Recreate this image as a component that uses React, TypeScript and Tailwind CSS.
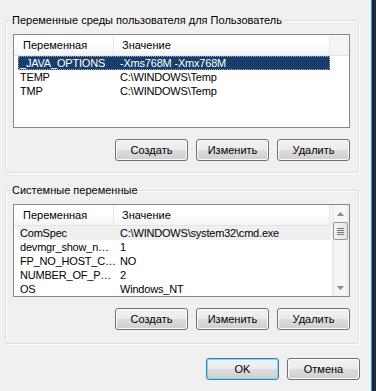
const FONT = "font-['Liberation_Sans',Arial,sans-serif]"

type Row = { name: string; value: string }

const USER_VARS: Row[] = [
  { name: '_JAVA_OPTIONS', value: '-Xms768M -Xmx768M' },
  { name: 'TEMP', value: 'C:\\WINDOWS\\Temp' },
  { name: 'TMP', value: 'C:\\WINDOWS\\Temp' },
]

const SYS_VARS: Row[] = [
  { name: 'ComSpec', value: 'C:\\WINDOWS\\system32\\cmd.exe' },
  { name: 'devmgr_show_n…', value: '1' },
  { name: 'FP_NO_HOST_C…', value: 'NO' },
  { name: 'NUMBER_OF_P…', value: '2' },
  { name: 'OS', value: 'Windows_NT' },
]

function Btn({ label, primary }: { label: string; primary?: boolean }) {
  return (
    <button
      className={
        primary
          ? 'w-[73px] h-[22px] rounded-[3px] border border-[#3c7fb1] bg-[linear-gradient(#f2f2f2_0%,#ebebeb_50%,#dddddd_50%,#cfcfcf_100%)] shadow-[inset_0_0_0_1px_#7fd8f4] text-[11px] text-black'
          : 'w-[73px] h-[22px] rounded-[3px] border border-[#707070] bg-[linear-gradient(#f2f2f2_0%,#ebebeb_50%,#dddddd_50%,#cfcfcf_100%)] shadow-[inset_0_0_0_1px_#fcfcfc] text-[11px] text-black'
      }
    >
      {label}
    </button>
  )
}

function Header() {
  return (
    <div className="flex h-[21px] bg-[linear-gradient(#ffffff_0%,#ffffff_45%,#f3f4f6_100%)] border-b border-[#e2e4e7] text-[11px] text-black">
      <div className="w-[100px] pl-[9px] flex items-center border-r border-[#e3e8ee]">Переменная</div>
      <div className="w-[216px] pl-[8px] flex items-center border-r border-[#e3e8ee]">Значение</div>
      <div className="flex-1 bg-[#f4f4f4]" />
    </div>
  )
}

function Rows({ rows, selected, soft }: { rows: Row[]; selected?: number; soft?: number }) {
  return (
    <div className="text-[11px] tracking-[-0.2px]">
      {rows.map((r, i) => (
        <div
          key={r.name}
          className={
            i === selected
              ? 'ml-[4px] w-[312px] h-[14px] flex items-center bg-[#183e69] text-white outline outline-1 outline-dotted outline-offset-[-1px] outline-[#8ea9c8]'
              : i === soft
                ? 'ml-[4px] w-[313px] h-[14px] flex items-center bg-[#efefef] text-black'
                : 'ml-[4px] w-[312px] h-[14px] flex items-center text-black'
          }
        >
          <div className="w-[96px] shrink-0 pl-[2px] whitespace-nowrap">{r.name}</div>
          <div className="pl-[6px] whitespace-nowrap">{r.value}</div>
        </div>
      ))}
    </div>
  )
}

function Arrow({ up }: { up?: boolean }) {
  return (
    <div className="h-[17px] flex items-center justify-center">
      <svg width="7" height="4" viewBox="0 0 7 4">
        {up ? <path d="M0 4 L3.5 0 L7 4 Z" fill="#8a8a8a" /> : <path d="M0 0 L3.5 4 L7 0 Z" fill="#8a8a8a" />}
      </svg>
    </div>
  )
}

function ScrollBar() {
  return (
    <div className="w-[17px] flex flex-col bg-[linear-gradient(90deg,#e8e8e8,#f5f5f5_20%,#f5f5f5_80%,#e8e8e8)]">
      <Arrow up />
      <div className="mx-[1px] h-[18px] rounded-[2px] border border-[#979797] bg-[linear-gradient(90deg,#f3f3f3,#e6e6e6)] flex flex-col items-center justify-center gap-[1px]">
        <div className="w-[7px] h-[1px] bg-[#777]" />
        <div className="w-[7px] h-[1px] bg-[#777]" />
        <div className="w-[7px] h-[1px] bg-[#777]" />
        <div className="w-[7px] h-[1px] bg-[#777]" />
      </div>
      <div className="flex-1" />
      <Arrow />
    </div>
  )
}

function Group({ title, height, children }: { title: string; height: string; children: React.ReactNode }) {
  return (
    <fieldset className={`${height} w-[354px] border border-[#d5dfe5] rounded-[3px] shadow-[inset_1px_1px_0_#ffffff,1px_1px_0_#ffffff] px-[7px]`}>
      <legend className="ml-[-2px] px-[1px] h-[15px] leading-[15px] text-[11px] text-black">{title}</legend>
      {children}
    </fieldset>
  )
}

export default function App() {
  return (
    <div className={`${FONT} flex w-[376px] h-[391px] bg-[#f0f0f0]`}>
      <div className="w-[369px] pl-[5px] pt-[13px]">
        <Group title="Переменные среды пользователя для Пользователь" height="h-[160px]">
          <div className="mt-[6px] w-[337px] h-[94px] border border-[#828790] bg-white">
            <Header />
            <Rows rows={USER_VARS} selected={0} />
          </div>
          <div className="flex justify-end gap-[8px] pr-[1px] mt-[11px]">
            <Btn label="Создать" />
            <Btn label="Изменить" />
            <Btn label="Удалить" />
          </div>
        </Group>

        <div className="mt-[10px]">
          <Group title="Системные переменные" height="h-[161px]">
            <div className="mt-[6px] w-[337px] h-[93px] border border-[#828790] bg-white flex">
              <div className="flex-1 overflow-hidden">
                <Header />
                <Rows rows={SYS_VARS} soft={0} />
              </div>
              <ScrollBar />
            </div>
            <div className="flex justify-end gap-[8px] pr-[1px] mt-[11px]">
              <Btn label="Создать" />
              <Btn label="Изменить" />
              <Btn label="Удалить" />
            </div>
          </Group>
        </div>

        <div className="flex justify-end gap-[8px] w-[355px] mt-[14px]">
          <Btn label="OK" primary />
          <Btn label="Отмена" />
        </div>
      </div>
      <div className="w-[1px] bg-white" />
      <div className="w-[1px] bg-[#dfe8ef]" />
      <div className="w-[1px] bg-[#2aa6e0]" />
      <div className="w-[4px] bg-[#1c2a37]" />
    </div>
  )
}
